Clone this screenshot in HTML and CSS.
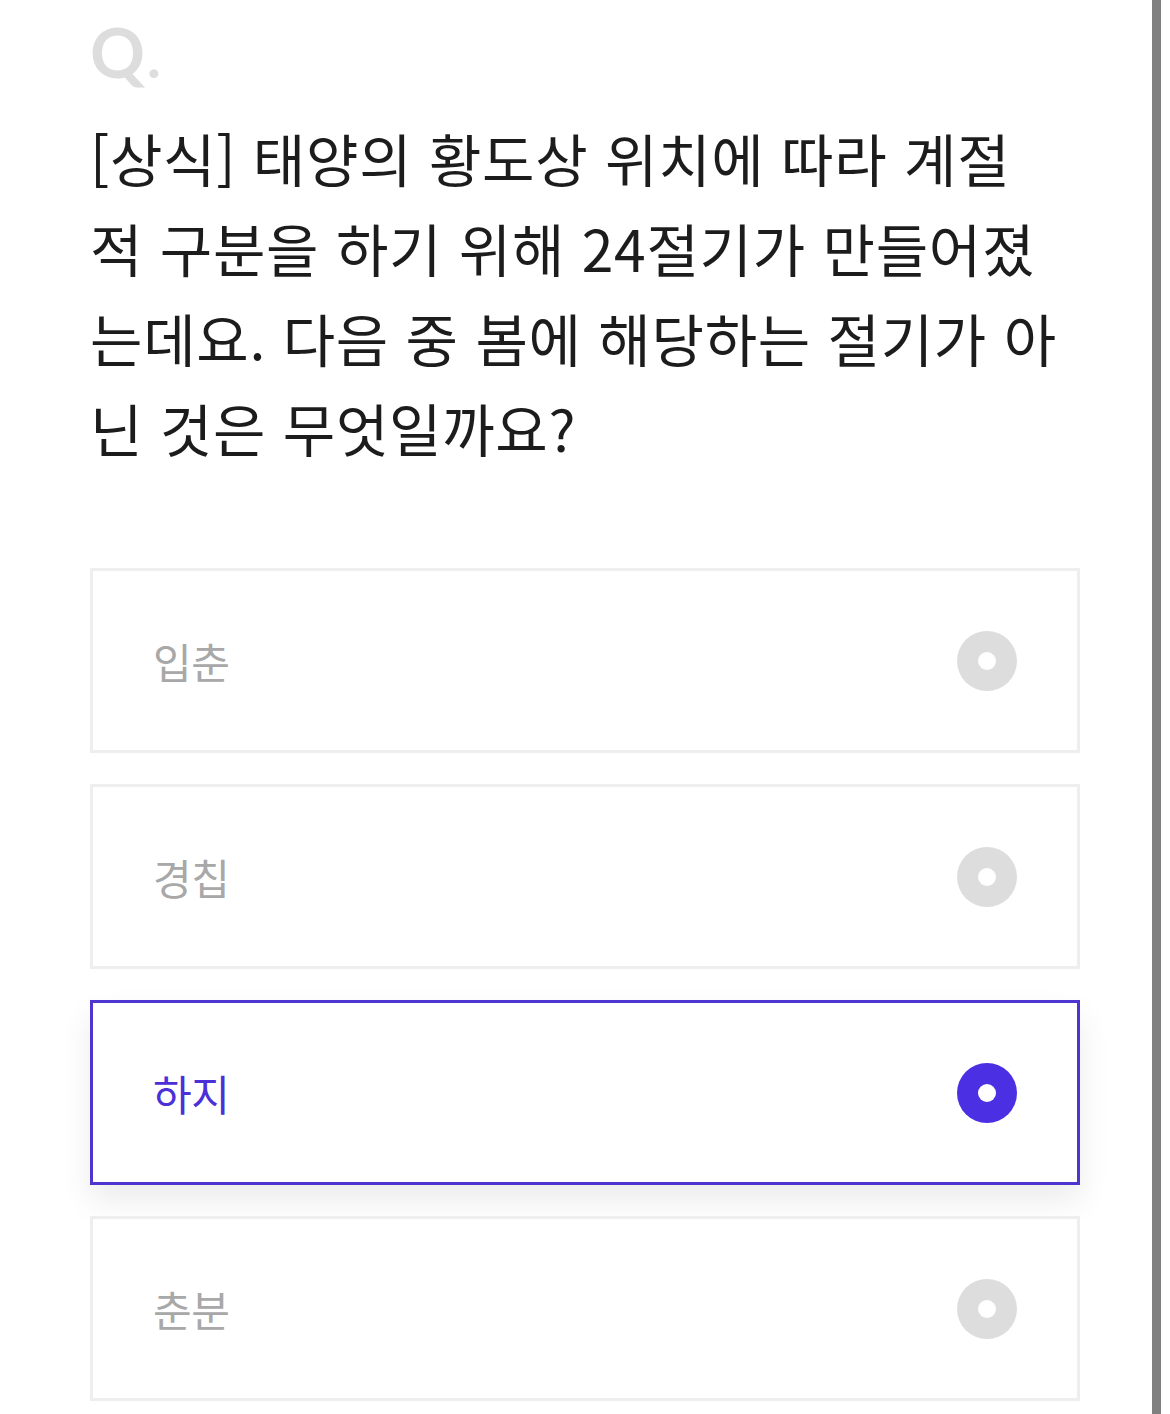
FILE: index.html
```html
<!DOCTYPE html>
<html lang="ko">
<head>
    <meta charset="UTF-8">
    <meta name="viewport" content="width=device-width, initial-scale=1.0">
    <title>퀴즈</title>
    <link rel="stylesheet" href="styles.css">
</head>
<body>
    <div class="quiz-page">
        <div class="quiz-content">
            <div class="q-mark">Q<span class="q-dot">.</span></div>
            <p class="question">[상식] 태양의 황도상 위치에 따라 계절<br>적 구분을 하기 위해 24절기가 만들어졌<br>는데요. 다음 중 봄에 해당하는 절기가 아<br>닌 것은 무엇일까요?</p>

            <ul class="option-list">
                <li class="option">
                    <span class="option-label">입춘</span>
                    <span class="radio"></span>
                </li>
                <li class="option">
                    <span class="option-label">경칩</span>
                    <span class="radio"></span>
                </li>
                <li class="option selected">
                    <span class="option-label">하지</span>
                    <span class="radio"></span>
                </li>
                <li class="option">
                    <span class="option-label">춘분</span>
                    <span class="radio"></span>
                </li>
            </ul>
        </div>
        <div class="scroll-track">
            <div class="scroll-thumb"></div>
        </div>
    </div>
</body>
</html>
```

FILE: styles.css
```css
* {
    margin: 0;
    padding: 0;
    box-sizing: border-box;
}

body {
    font-family: 'Noto Sans CJK KR', 'Noto Sans', sans-serif;
    background: white;
    color: #1c1c1c;
    height: 1414px;
    overflow: hidden;
}

.quiz-page {
    display: flex;
    height: 100%;
}

.quiz-content {
    flex: 1;
    min-width: 0;
    padding: 14px 72px 0 90px;
}

.q-mark {
    font-family: Lato, 'Liberation Sans', sans-serif;
    font-weight: 700;
    font-size: 68px;
    line-height: 76px;
    color: #dddddd;
    height: 76px;
}

.q-dot {
    font-size: 58px;
    margin-left: 2px;
}

.question {
    margin-top: 22px;
    white-space: nowrap;
    font-size: 57px;
    line-height: 90px;
    font-weight: 400;
    letter-spacing: 0.7px;
    color: #1c1c1c;
}

.option-list {
    list-style: none;
    margin-top: 96px;
    display: flex;
    flex-direction: column;
    gap: 31px;
}

.option {
    height: 185px;
    border: 3px solid #eeeeee;
    background: white;
    display: flex;
    align-items: center;
    justify-content: space-between;
    padding: 0 60px;
}

.option-label {
    font-size: 42px;
    color: #a8a8a8;
    letter-spacing: -0.5px;
}

.radio {
    width: 60px;
    height: 60px;
    border-radius: 50%;
    background: #dddddd;
    display: flex;
    align-items: center;
    justify-content: center;
}

.radio::after {
    content: '';
    width: 18px;
    height: 18px;
    border-radius: 50%;
    background: white;
}

.option.selected {
    border-color: #4d35d0;
    box-shadow: 0 16px 30px rgba(0,0,0,0.08);
}

.option.selected .option-label {
    color: #4b30d8;
}

.option.selected .radio {
    background: #4a2fe3;
}

.scroll-track {
    width: 18px;
    padding-right: 9px;
}

.scroll-thumb {
    width: 9px;
    height: 100%;
    background: #808080;
}
```
